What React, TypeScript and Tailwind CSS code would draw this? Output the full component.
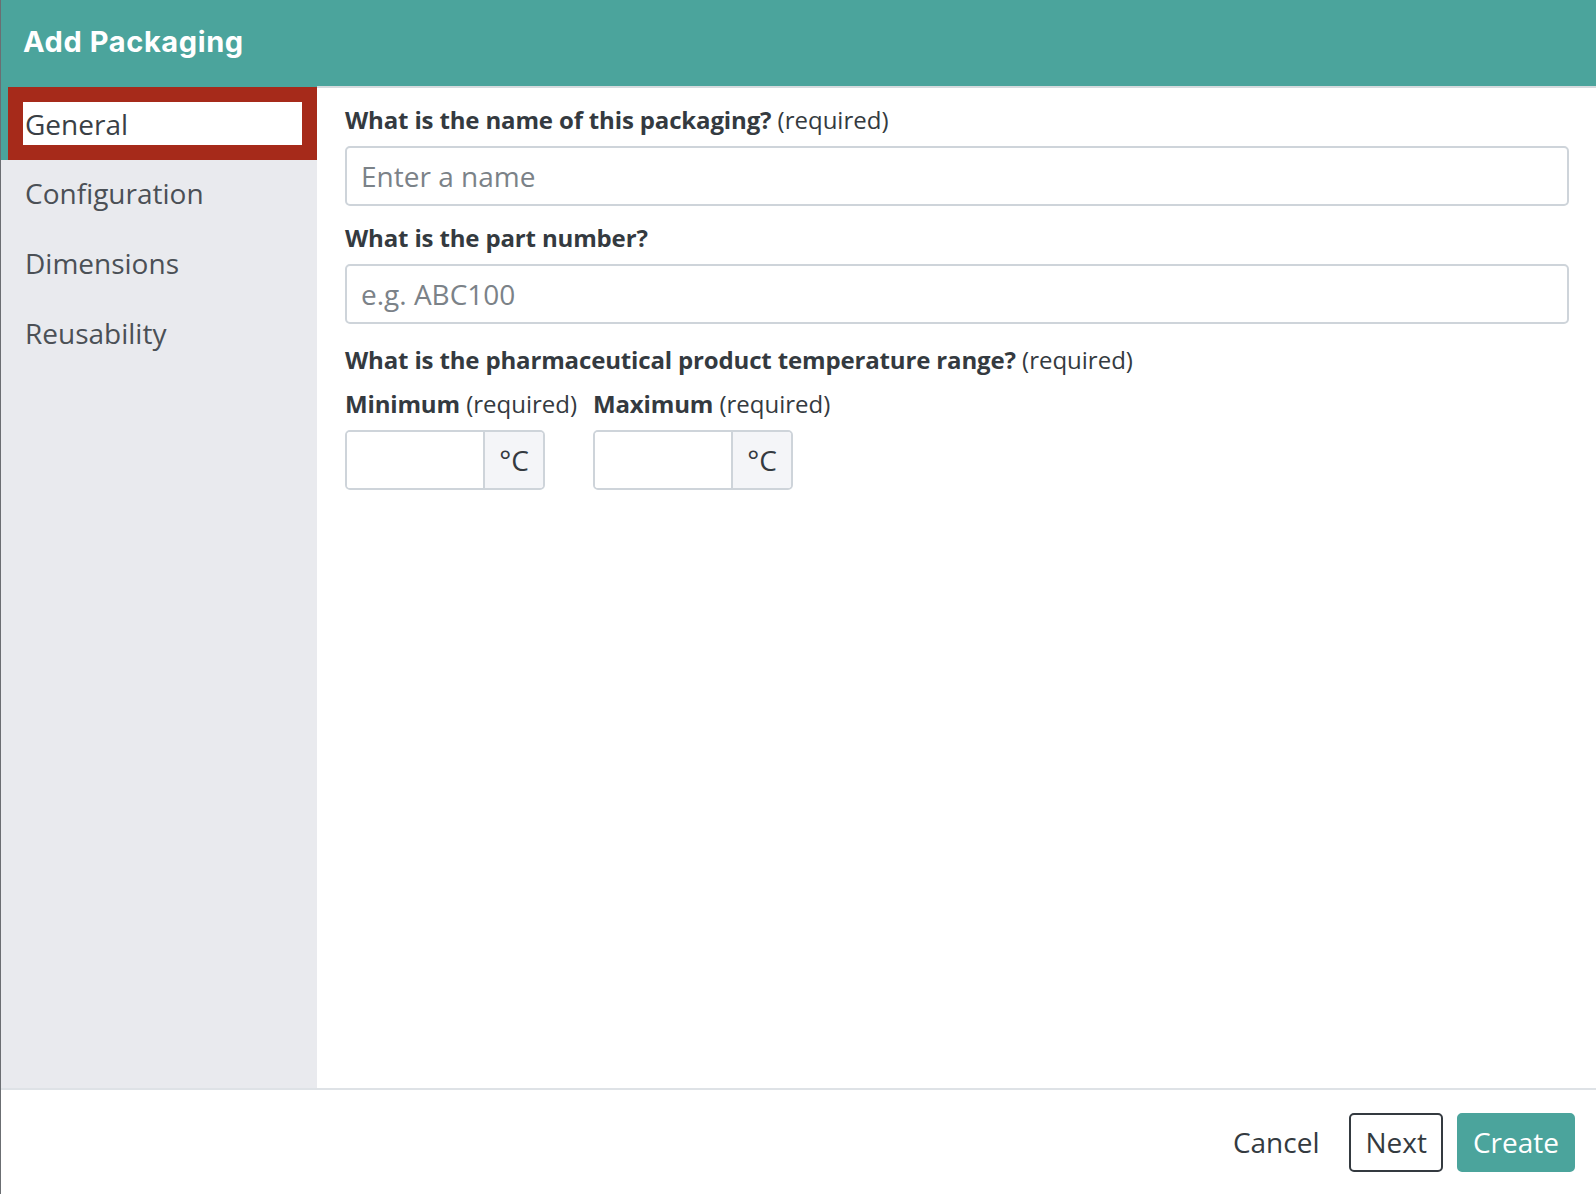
import React from "react";

const navItems = ["Configuration", "Dimensions", "Reusability"];

function Label({ strong, note }: { strong: string; note?: string }) {
  return (
    <div className="text-[24px] leading-[36px] text-[#343a40] whitespace-nowrap">
      <span className="font-bold tracking-[-0.15px]">{strong}</span>
      {note ? <span className="font-normal"> {note}</span> : null}
    </div>
  );
}

function TempInput() {
  return (
    <div className="flex w-[200px] h-[60px] border-2 border-[#ced4da] rounded-[5px] overflow-hidden bg-white">
      <input
        type="text"
        className="flex-1 min-w-0 px-[14px] text-[28px] text-[#343a40] outline-none bg-white"
      />
      <div className="w-[60px] flex items-center justify-center border-l-2 border-[#ced4da] bg-[#f4f5f8] text-[28px] text-[#343a40]">
        °C
      </div>
    </div>
  );
}

export default function App() {
  return (
    <div className="w-[1596px] h-[1194px] flex flex-col bg-white border-l border-[#6b6e72] font-['Open_Sans',sans-serif] overflow-hidden">
      {/* Title bar */}
      <header className="h-[86px] shrink-0 bg-[#4ba49c] flex items-center pl-[22px] pb-[3px]">
        <h1 className="font-['Inter',sans-serif] font-bold text-[29px] text-white tracking-[0.6px] leading-none">
          Add Packaging
        </h1>
      </header>

      <div className="flex h-[1002px] shrink-0">
        {/* Step navigation */}
        <aside className="w-[316px] shrink-0 bg-[#e9eaee] flex flex-col">
          <div className="h-[74px] bg-[#4ba49c] pl-[7px] pt-[1px]">
            <div className="h-[73px] bg-[#a62a1a] p-[15px]">
              <div className="h-[43px] bg-white flex items-center pl-[2px] text-[28px] text-[#3a3f45]">
                General
              </div>
            </div>
          </div>
          {navItems.map((item) => (
            <div
              key={item}
              className="h-[70px] flex items-center pl-[24px] pb-[4px] text-[28px] text-[#4b5056]"
            >
              {item}
            </div>
          ))}
        </aside>

        {/* Form */}
        <main className="flex-1 border-t-2 border-[#d6dbde] pl-[28px] pr-[27px] pt-[14px]">
          <Label strong="What is the name of this packaging?" note="(required)" />
          <input
            type="text"
            placeholder="Enter a name"
            className="mt-[8px] w-full h-[60px] border-2 border-[#ced4da] rounded-[5px] px-[14px] text-[28px] text-[#343a40] placeholder:text-[#7b8288] outline-none"
          />

          <div className="mt-[14px]">
            <Label strong="What is the part number?" />
          </div>
          <input
            type="text"
            placeholder="e.g. ABC100"
            className="mt-[8px] w-full h-[60px] border-2 border-[#ced4da] rounded-[5px] px-[14px] text-[28px] text-[#343a40] placeholder:text-[#7b8288] outline-none"
          />

          <div className="mt-[18px]">
            <Label
              strong="What is the pharmaceutical product temperature range?"
              note="(required)"
            />
          </div>

          <div className="mt-[8px] flex gap-[16px]">
            <div className="flex flex-col gap-[8px]">
              <Label strong="Minimum" note="(required)" />
              <TempInput />
            </div>
            <div className="flex flex-col gap-[8px]">
              <Label strong="Maximum" note="(required)" />
              <TempInput />
            </div>
          </div>
        </main>
      </div>

      {/* Actions */}
      <footer className="flex-1 border-t-2 border-[#dee2e6] flex items-center justify-end gap-[14px] pr-[21px]">
        <button className="h-[59px] px-[16px] text-[28px] text-[#343a40] bg-transparent">
          Cancel
        </button>
        <button className="h-[59px] px-[14px] text-[28px] text-[#343a40] bg-white border-2 border-[#343a40] rounded-[5px]">
          Next
        </button>
        <button className="h-[59px] px-[14px] text-[28px] text-white bg-[#4ba49c] border-2 border-[#4ba49c] rounded-[5px]">
          Create
        </button>
      </footer>
    </div>
  );
}
